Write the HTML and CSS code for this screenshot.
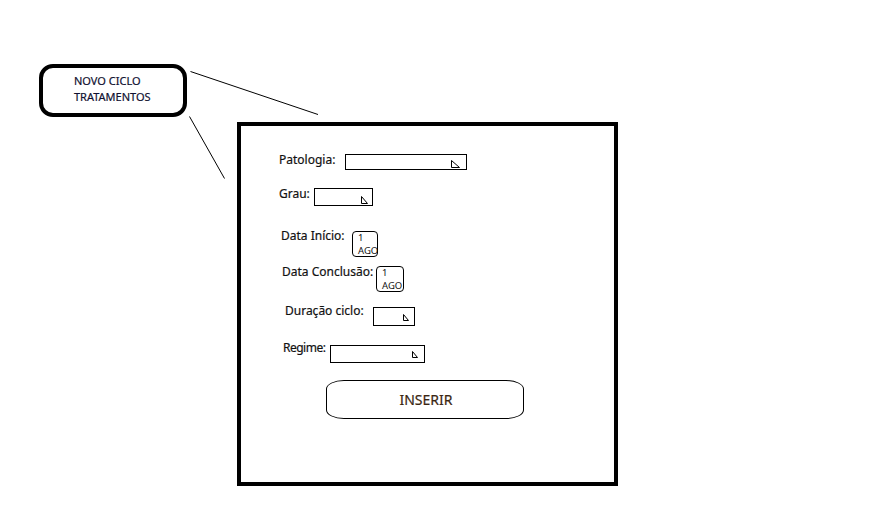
FILE: index.html
```html
<!DOCTYPE html>
<html lang="pt">
<head>
  <meta charset="UTF-8">
  <title>Novo Ciclo Tratamentos</title>
  <meta name="viewport" content="width=device-width, initial-scale=1.0">
  <link rel="stylesheet" href="styles.css">
</head>
<body>

  <div class="canvas">

    <!-- ligacoes do balao ao formulario -->
    <svg class="connectors" width="884" height="528" viewBox="0 0 884 528">
      <line x1="190.5" y1="71.5" x2="318" y2="114.5" />
      <line x1="189.5" y1="116.5" x2="224.5" y2="178.5" />
    </svg>

    <!-- Balao -->
    <div class="callout">
      NOVO CICLO<br>TRATAMENTOS
    </div>

    <!-- Formulario -->
    <div class="form-box">

      <div class="row row-patologia">
        <span class="label">Patologia:</span>
        <div class="field">
          <svg class="grip" width="9" height="8" viewBox="0 0 9 8"><path d="M0.5 0.5 L0.5 7.5 L8.5 7.5 Z" /></svg>
        </div>
      </div>

      <div class="row row-grau">
        <span class="label">Grau:</span>
        <div class="field">
          <svg class="grip" width="7" height="8" viewBox="0 0 7 8"><path d="M0.5 0.5 L0.5 7.5 L6.5 7.5 Z" /></svg>
        </div>
      </div>

      <div class="row row-inicio">
        <span class="label">Data Início:</span>
        <div class="date">
          <span class="day">1</span>
          <span class="month">AGO</span>
        </div>
      </div>

      <div class="row row-conclusao">
        <span class="label">Data Conclusão:</span>
        <div class="date">
          <span class="day">1</span>
          <span class="month">AGO</span>
        </div>
      </div>

      <div class="row row-duracao">
        <span class="label">Duração ciclo:</span>
        <div class="field">
          <svg class="grip" width="6" height="7" viewBox="0 0 6 7"><path d="M0.5 0.5 L0.5 6.5 L5.5 6.5 Z" /></svg>
        </div>
      </div>

      <div class="row row-regime">
        <span class="label">Regime:</span>
        <div class="field">
          <svg class="grip" width="6" height="7" viewBox="0 0 6 7"><path d="M0.5 0.5 L0.5 6.5 L5.5 6.5 Z" /></svg>
        </div>
      </div>

      <div class="actions">
        <button class="btn-inserir">INSERIR</button>
      </div>

    </div>
  </div>

</body>
</html>
```

FILE: styles.css
```css
* {
  box-sizing: border-box;
}
body {
  margin: 0;
  padding: 0;
  background-color: white;
  font-family: "Noto Sans", "Open Sans", sans-serif;
  color: #111;
}
.canvas {
  position: relative;
  width: 884px;
  height: 528px;
  overflow: hidden;
}
.connectors {
  position: absolute;
  left: 0;
  top: 0;
}
.connectors line {
  stroke: black;
  stroke-width: 1;
}

/* Balao */
.callout {
  position: absolute;
  left: 39px;
  top: 64px;
  width: 148px;
  height: 53px;
  border: 4px solid black;
  border-radius: 14px;
  padding: 5px 0 0 31px;
  font-size: 11px;
  line-height: 16px;
  color: #101030;
  -webkit-text-stroke: 0.2px #101030;
}

/* Formulario */
.form-box {
  position: absolute;
  left: 237px;
  top: 122px;
  width: 381px;
  height: 364px;
  border: 4px solid black;
  display: flex;
  flex-direction: column;
}
.row {
  display: flex;
  align-items: flex-start;
}
.label {
  font-size: 12px;
  line-height: 14px;
  white-space: nowrap;
  -webkit-text-stroke: 0.2px #111;
}
.field {
  border: 1px solid black;
  display: flex;
  justify-content: flex-end;
  align-items: flex-end;
  padding: 0 5px 2px 0;
}
.grip path {
  fill: none;
  stroke: black;
  stroke-width: 1;
}
.date {
  width: 26px;
  height: 26px;
  border: 1px solid black;
  border-radius: 4px;
  padding: 0 0 0 5px;
  font-size: 9.5px;
  line-height: 12px;
  white-space: nowrap;
}
.date .day,
.date .month {
  display: block;
  height: 12px;
}
.date .month {
  margin-top: 1px;
}

.row-patologia { margin-top: 27px; padding-left: 38px; }
.row-patologia .label { width: 66px; }
.row-patologia .field { margin-top: 1px; width: 122px; height: 16px; padding-right: 6px; padding-bottom: 1px; }

.row-grau { margin-top: 17px; padding-left: 38px; }
.row-grau .label { width: 35px; }
.row-grau .field { margin-top: 1px; width: 59px; height: 18px; padding-right: 4px; padding-bottom: 1px; }

.row-inicio { margin-top: 23px; padding-left: 40px; }
.row-inicio .label { width: 71px; }
.row-inicio .date { margin-top: 2px; }

.row-conclusao { margin-top: 8px; padding-left: 41px; }
.row-conclusao .label { width: 94px; }
.row-conclusao .date { margin-top: 1px; width: 28px; }

.row-duracao { margin-top: 12px; padding-left: 44px; }
.row-duracao .label { width: 88px; }
.row-duracao .field { margin-top: 3px; width: 42px; height: 19px; padding-right: 5px; padding-bottom: 4px; }

.row-regime { margin-top: 15px; padding-left: 42px; }
.row-regime .label { width: 47px; letter-spacing: -0.5px; }
.row-regime .field { margin-top: 4px; width: 95px; height: 18px; padding-right: 6px; padding-bottom: 4px; }

.actions {
  margin-top: 17px;
  padding-left: 85px;
}
.btn-inserir {
  width: 198px;
  height: 39px;
  border: 1px solid black;
  border-radius: 18px / 9px;
  background-color: white;
  font-family: "Noto Sans", "Open Sans", sans-serif;
  font-size: 14px;
  color: #3a2612;
  -webkit-text-stroke: 0.2px #3a2612;
  padding: 0 0 0 2px;
}
```
